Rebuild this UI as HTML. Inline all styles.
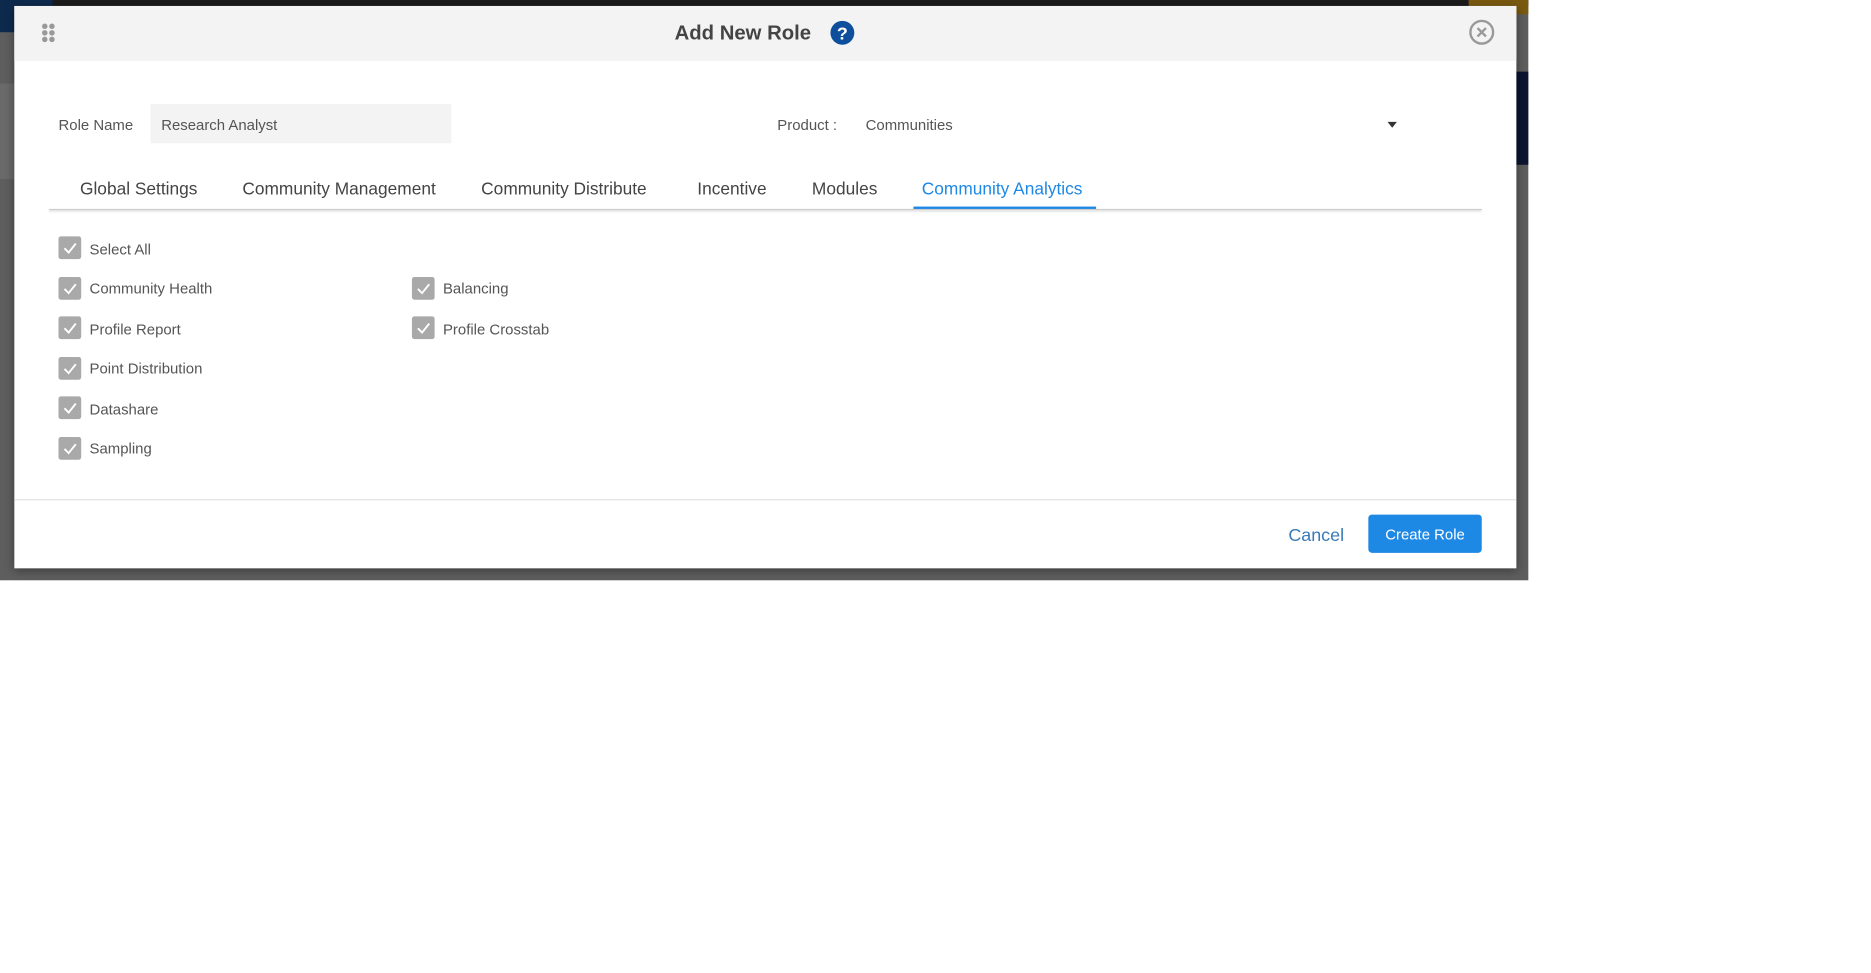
<!DOCTYPE html>
<html><head><meta charset="utf-8"><style>
html,body{margin:0;padding:0;width:1871px;height:972px;overflow:hidden;background:#fff;font-family:"Liberation Sans",sans-serif}
#w{position:absolute;left:0;top:0;width:1568px;height:815px;transform:scale(1.194);transform-origin:0 0}
.a{position:absolute}
.t{position:absolute;white-space:nowrap;line-height:1}
.cb{position:absolute;width:19px;height:19px;background:#a9a9a9;border-radius:2px}
.cb svg{position:absolute;left:3px;top:3px}
.lb{position:absolute;font-size:12.5px;color:#555;white-space:nowrap;line-height:1}
.tab{position:absolute;top:151.5px;font-size:14.5px;color:#444;white-space:nowrap;line-height:1}
</style></head><body><div id="w">
<div class="a" style="left:0;top:0;width:1280px;height:486px;background:#5e5e5e"></div>
<div class="a" style="left:0;top:0;width:1280px;height:5px;background:#1b1b1b"></div>
<div class="a" style="left:0;top:0;width:44px;height:27px;background:#0d2a4d"></div>
<div class="a" style="left:1230px;top:0;width:50px;height:12px;background:#7a5a10"></div>
<div class="a" style="left:1268px;top:60px;width:12px;height:78px;background:#0b1530"></div>
<div class="a" style="left:0;top:70px;width:12px;height:80px;background:#6a6a6a"></div>
<div class="a" style="left:12px;top:5px;width:1258px;height:471px;background:#fff;box-shadow:0 2px 8px rgba(0,0,0,.4)"></div>
<div class="a" style="left:12px;top:5px;width:1258px;height:46px;background:#f3f3f3"></div>
<svg class="a" style="left:34px;top:19px" width="14" height="17"><g fill="#999"><circle cx="3.5" cy="3" r="2.3"/><circle cx="9.5" cy="3" r="2.3"/><circle cx="3.5" cy="8.5" r="2.3"/><circle cx="9.5" cy="8.5" r="2.3"/><circle cx="3.5" cy="14" r="2.3"/><circle cx="9.5" cy="14" r="2.3"/></g></svg>
<div class="t" style="left:565px;top:19px;font-size:17px;font-weight:bold;color:#444">Add New Role</div>
<svg class="a" style="left:695px;top:17px" width="21" height="21"><circle cx="10.5" cy="10.5" r="10" fill="#0d4f9c"/><text x="10.5" y="16" text-anchor="middle" font-family="Liberation Sans" font-weight="bold" font-size="15" fill="#fff">?</text></svg>
<svg class="a" style="left:1230px;top:16px" width="22" height="22"><circle cx="11" cy="11" r="9.5" fill="none" stroke="#999" stroke-width="2"/><path d="M7.5 7.5L14.5 14.5M14.5 7.5L7.5 14.5" stroke="#999" stroke-width="2"/></svg>
<div class="t" style="left:49px;top:98.5px;font-size:12.5px;color:#555">Role Name</div>
<div class="a" style="left:126px;top:87px;width:252px;height:33px;background:#f3f3f3"></div>
<div class="t" style="left:135px;top:98.5px;font-size:12.5px;color:#555">Research Analyst</div>
<div class="t" style="left:651px;top:98.5px;font-size:12.5px;color:#555">Product :</div>
<div class="t" style="left:725px;top:98.5px;font-size:12.5px;color:#555">Communities</div>
<svg class="a" style="left:1162px;top:102px" width="9" height="6"><path d="M0 0H8L4 5Z" fill="#333"/></svg>
<div class="tab" style="left:67px">Global Settings</div>
<div class="tab" style="left:203px">Community Management</div>
<div class="tab" style="left:403px">Community Distribute</div>
<div class="tab" style="left:584px">Incentive</div>
<div class="tab" style="left:680px">Modules</div>
<div class="tab" style="left:772px;color:#1e88e5">Community Analytics</div>
<div class="a" style="left:41px;top:175px;width:1200px;height:1px;background:#ccc;box-shadow:0 1px 2px rgba(0,0,0,.2)"></div>
<div class="a" style="left:765px;top:173px;width:153px;height:2px;background:#1e88e5"></div>

<div class="cb" style="left:49px;top:198px"><svg width="13" height="13"><path d="M2 7L5.5 10.5L11.5 3" fill="none" stroke="#fff" stroke-width="1.6"/></svg></div><div class="lb" style="left:75px;top:203px">Select All</div>
<div class="cb" style="left:49px;top:232px"><svg width="13" height="13"><path d="M2 7L5.5 10.5L11.5 3" fill="none" stroke="#fff" stroke-width="1.6"/></svg></div><div class="lb" style="left:75px;top:236px">Community Health</div>
<div class="cb" style="left:49px;top:265px"><svg width="13" height="13"><path d="M2 7L5.5 10.5L11.5 3" fill="none" stroke="#fff" stroke-width="1.6"/></svg></div><div class="lb" style="left:75px;top:270px">Profile Report</div>
<div class="cb" style="left:49px;top:299px"><svg width="13" height="13"><path d="M2 7L5.5 10.5L11.5 3" fill="none" stroke="#fff" stroke-width="1.6"/></svg></div><div class="lb" style="left:75px;top:303px">Point Distribution</div>
<div class="cb" style="left:49px;top:332px"><svg width="13" height="13"><path d="M2 7L5.5 10.5L11.5 3" fill="none" stroke="#fff" stroke-width="1.6"/></svg></div><div class="lb" style="left:75px;top:337px">Datashare</div>
<div class="cb" style="left:49px;top:366px"><svg width="13" height="13"><path d="M2 7L5.5 10.5L11.5 3" fill="none" stroke="#fff" stroke-width="1.6"/></svg></div><div class="lb" style="left:75px;top:370px">Sampling</div>
<div class="cb" style="left:345px;top:232px"><svg width="13" height="13"><path d="M2 7L5.5 10.5L11.5 3" fill="none" stroke="#fff" stroke-width="1.6"/></svg></div><div class="lb" style="left:371px;top:236px">Balancing</div>
<div class="cb" style="left:345px;top:265px"><svg width="13" height="13"><path d="M2 7L5.5 10.5L11.5 3" fill="none" stroke="#fff" stroke-width="1.6"/></svg></div><div class="lb" style="left:371px;top:270px">Profile Crosstab</div>

<div class="a" style="left:12px;top:418px;width:1258px;height:1px;background:#e2e2e2"></div>
<div class="t" style="left:1079px;top:441px;font-size:15px;color:#3a7ab8">Cancel</div>
<div class="a" style="left:1146px;top:431px;width:95px;height:32px;background:#1e88e5;border-radius:3px"></div>
<div class="t" style="left:1146px;top:441.5px;width:95px;text-align:center;font-size:12.5px;color:#fff">Create Role</div>
</div></body></html>
